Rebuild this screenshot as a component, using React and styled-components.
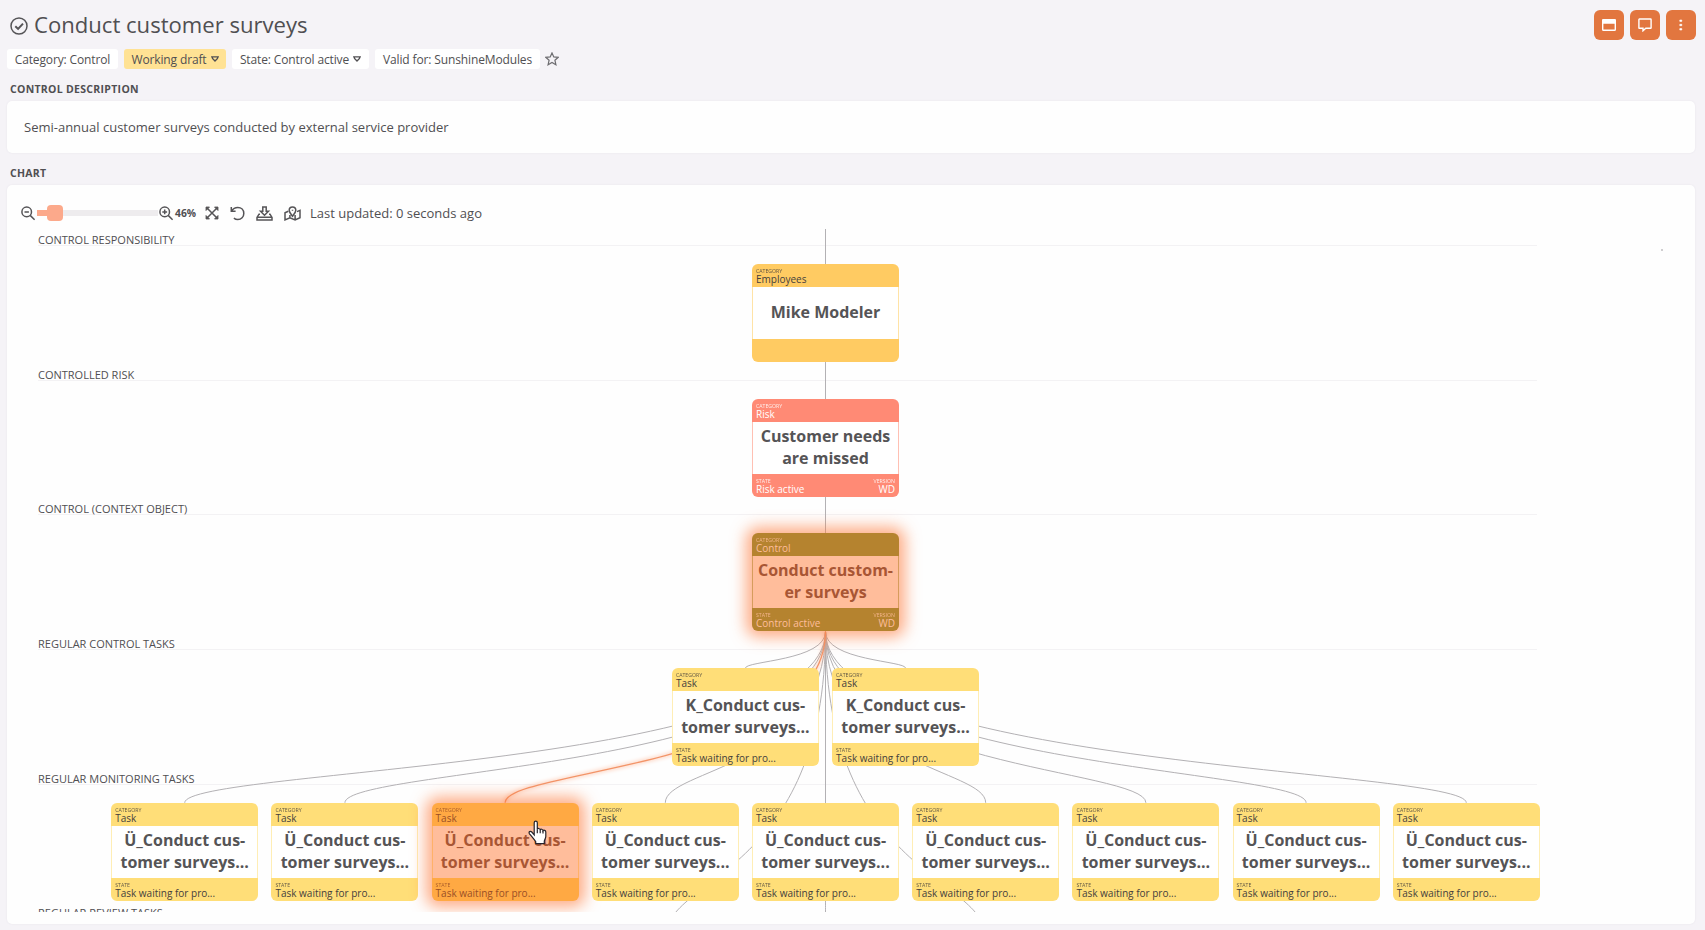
import React from "react";
import styled, { createGlobalStyle } from "styled-components";

const lanes = [
  "Control responsibility",
  "Controlled risk",
  "Control (context object)",
  "Regular control tasks",
  "Regular monitoring tasks",
  "Regular review tasks",
];

const LANE = 134.7;
const COLUMN = 160.2;
const CENTER = 818.5;
const NODE_WIDTH = 147;
const CONTROL_BOTTOM = 402.5;

const rowTop = (row) => 35 + row * LANE;
const columnLeft = (col) => CENTER + col * COLUMN - NODE_WIDTH / 2;

const monitoring = [-4, -3, -2, -1, 0, 1, 2, 3, 4];

const nodes = [
  { row: 0, col: 0, kind: "employee", category: "Employees", lines: ["Mike Modeler"] },
  {
    row: 1,
    col: 0,
    kind: "risk",
    category: "Risk",
    lines: ["Customer needs", "are missed"],
    state: "Risk active",
    version: "WD",
  },
  {
    row: 2,
    col: 0,
    kind: "control",
    category: "Control",
    lines: ["Conduct custom-", "er surveys"],
    state: "Control active",
    version: "WD",
  },
  ...[-0.5, 0.5].map((col) => ({
    row: 3,
    col,
    kind: "task",
    category: "Task",
    lines: ["K_Conduct cus-", "tomer surveys..."],
    state: "Task waiting for pro...",
  })),
  ...monitoring.map((col) => ({
    row: 4,
    col,
    kind: col === -2 ? "hovered" : "task",
    category: "Task",
    lines: ["Ü_Conduct cus-", "tomer surveys..."],
    state: "Task waiting for pro...",
  })),
];

const edges = [
  ...[-0.5, 0.5].map((col) => ({ row: 3, col })),
  ...monitoring.map((col) => ({ row: 4, col })),
  ...[-1, 0, 1].map((col) => ({ row: 5, col })),
];

const palette = {
  employee: { bar: "#ffcb62", body: "#fff", border: "#ffe3a6", text: "#45403d", title: "#555456" },
  risk: { bar: "#ff8a75", body: "#fff", border: "#ffc0b3", text: "#fff", title: "#555456" },
  control: { bar: "#b5832f", body: "#ffbd9b", border: "#d69c5c", text: "#ffbd9b", title: "#a85634" },
  task: { bar: "#ffde78", body: "#fff", border: "#ffeeb5", text: "#45403d", title: "#555456" },
  hovered: { bar: "#ffa943", body: "#ffbd9b", border: "#ffb168", text: "#9a4f26", title: "#a85634" },
};

const edgePath = ({ row, col }) => {
  const x = CENTER + col * COLUMN;
  const y = rowTop(row);
  const bend = CONTROL_BOTTOM + (y - CONTROL_BOTTOM) * 0.8;
  return `M${CENTER} ${CONTROL_BOTTOM}C${CENTER} ${bend} ${x} ${bend} ${x} ${y}`;
};

function Node({ node }) {
  const colors = palette[node.kind];
  const glow = node.kind === "control" || node.kind === "hovered";
  return (
    <NodeBox
      $colors={colors}
      $glow={glow}
      style={{ left: columnLeft(node.col), top: rowTop(node.row) }}
    >
      <NodeBar $colors={colors}>
        <Field>
          <FieldName>CATEGORY</FieldName>
          <FieldValue>{node.category}</FieldValue>
        </Field>
      </NodeBar>
      <NodeTitle $colors={colors}>
        {node.lines.map((line) => (
          <span key={line}>{line}</span>
        ))}
      </NodeTitle>
      <NodeBar $colors={colors}>
        {node.state && (
          <Field>
            <FieldName>STATE</FieldName>
            <FieldValue>{node.state}</FieldValue>
          </Field>
        )}
        {node.version && (
          <Field $right>
            <FieldName>VERSION</FieldName>
            <FieldValue>{node.version}</FieldValue>
          </Field>
        )}
      </NodeBar>
    </NodeBox>
  );
}

function Caret() {
  return (
    <CaretIcon viewBox="0 0 8 6">
      <path d="M.9.9h6.2l-.8 1.8L4 5 1.7 2.7z" />
    </CaretIcon>
  );
}

function Toolbar() {
  return (
    <ToolbarRow>
      <Icon $w={15} viewBox="0 0 15 15">
        <circle cx="5.7" cy="5.9" r="4.8" />
        <path d="M9.2 9.4l4.4 4.4M3.5 5.9h4.4" />
      </Icon>
      <Slider>
        <SliderThumb />
      </Slider>
      <Icon $w={15} viewBox="0 0 15 15">
        <circle cx="5.7" cy="5.9" r="4.8" />
        <path d="M9.2 9.4l4.4 4.4M3.3 5.9h4.8M5.7 3.5v4.8" />
      </Icon>
      <Percent>46%</Percent>
      <Icon $w={14} viewBox="0 0 14 14">
        <path d="M1.5 1.5l11 11M12.5 1.5l-11 11" />
        <path
          d="M1 1h3.5L1 4.5zM13 1v3.5L9.5 1zM13 13H9.5L13 9.5zM1 13V9.5L4.5 13z"
          fill="#555457"
          strokeWidth=".8"
        />
      </Icon>
      <Icon $w={15} $left={11} viewBox="0 0 15 15">
        <path d="M1.3 1v4.3h4.3M1.6 5.1C3 2.7 5.2 1.4 7.8 1.4c3.5 0 6 2.6 6 6s-2.5 6.1-6 6.1c-1.6 0-2.8-.5-3.9-1.4" />
      </Icon>
      <Icon $w={17} $left={11} viewBox="0 0 17 15">
        <path d="M6.8 1h3.4v4.2h2.3L8.5 9.3 4.5 5.2h2.3zM4 8.2H3L1 11.4V14h15v-2.6l-2-3.2h-1M1 11.2h15" />
      </Icon>
      <Icon $w={17} $left={11} viewBox="0 0 17 15">
        <path d="M8.5 10.2C6.6 7.7 5.2 6.3 5.2 4.3a3.3 3.3 0 0 1 6.6 0c0 2-1.4 3.4-3.3 5.9zM8.5 3.8v.9M4.3 5.2L1 6.7v7.2l4.9-2.1 5.2 2.1 4.9-2.1V4.4l-3 1.2M5.9 9v2.8M11.1 9v4.9" />
      </Icon>
      <Updated>Last updated: 0 seconds ago</Updated>
    </ToolbarRow>
  );
}

function App() {
  return (
    <Page>
      <GlobalStyle />
      <Header>
        <Heading>
          <Icon $w={18} viewBox="0 0 18 18">
            <circle cx="9" cy="9" r="8" />
            <path d="M5.3 9.2l2.8 2.7 4.9-5.3" strokeWidth="2" />
          </Icon>
          <Title>Conduct customer surveys</Title>
        </Heading>
        <Actions>
          <ActionButton>
            <svg width="14" height="12" viewBox="0 0 14 12">
              <rect x=".7" y=".7" width="12.6" height="10.6" rx=".8" />
              <path d="M1 1h12v3H1z" fill="#fff" />
            </svg>
          </ActionButton>
          <ActionButton>
            <svg width="14" height="14" viewBox="0 0 14 14">
              <path d="M1.4 1h11.2q.5 0 .5.5v8.3q0 .5-.5.5H7.8L5 12.8v-2.5H1.4q-.5 0-.5-.5V1.5q0-.5.5-.5z" />
            </svg>
          </ActionButton>
          <ActionButton>
            <svg width="4" height="12" viewBox="0 0 4 12">
              <path d="M.8 1h2v1.4h-2zM.8 5.3h2v1.4h-2zM.8 9.6h2V11h-2z" fill="#fff" strokeWidth=".6" />
            </svg>
          </ActionButton>
        </Actions>
      </Header>
      <Tags>
        <Tag $w={111}>Category: Control</Tag>
        <Tag $w={102} $active>
          Working draft <Caret />
        </Tag>
        <Tag $w={137}>
          State: Control active <Caret />
        </Tag>
        <Tag $w={165}>Valid for: SunshineModules</Tag>
        <StarIcon viewBox="0 0 14 14">
          <path d="M7 .9l1.8 4 4.4.4-3.3 2.9 1 4.5L7 10.4l-3.9 2.3 1-4.5L.8 5.3l4.4-.4z" />
        </StarIcon>
      </Tags>
      <SectionLabel>Control description</SectionLabel>
      <Description>Semi-annual customer surveys conducted by external service provider</Description>
      <SectionLabel>Chart</SectionLabel>
      <ChartCard>
        <Toolbar />
        <Canvas>
          <Lanes>
            {lanes.map((lane) => (
              <Lane key={lane}>{lane}</Lane>
            ))}
          </Lanes>
          <Edges width="1688" height="683">
            <path d={`M${CENTER} 0V${rowTop(2)}`} />
            {edges
              .filter((edge) => !(edge.row === 4 && edge.col === -2))
              .map((edge) => (
                <path key={`${edge.row}/${edge.col}`} d={edgePath(edge)} />
              ))}
            <ActiveEdge d={edgePath({ row: 4, col: -2 })} />
          </Edges>
          {nodes.map((node) => (
            <Node key={`${node.row}/${node.col}`} node={node} />
          ))}
          <Dot />
          <Pointer viewBox="0 0 20 25">
            <path d="M6.2 14.8V2.7c0-2.2 3.1-2.2 3.1 0v6.6c.3-1.3 2.8-1.1 2.9.6.5-1.1 2.7-.9 2.8.8.7-.9 2.8-.5 2.8 1.3v4.6c0 1.7-1.3 3.2-1.5 4.6v2.4H7.7v-2.1C6 19.3 3.7 16.5 1.5 13.8c-1.4-2 .9-3.2 2.3-1.8z" />
            <path d="M9.3 9.3v3.9M12.2 10v3.3M15 10.7v2.9" />
          </Pointer>
        </Canvas>
      </ChartCard>
    </Page>
  );
}

export default App;

const GlobalStyle = createGlobalStyle`
  * {
    box-sizing: border-box;
  }

  body {
    margin: 0;
    background: #f5f3f7;
    color: #504f52;
    font-family: "Open Sans", "Noto Sans", sans-serif;
    font-size: 13px;
    overflow: hidden;
  }
`;

const Page = styled.div`
  display: flex;
  flex-direction: column;
  height: 930px;
  padding: 10px 10px 6px 7px;
`;

const Header = styled.div`
  display: flex;
  justify-content: space-between;
  height: 39px;
  margin-right: -1px;
`;

const Heading = styled.div`
  display: flex;
  align-items: center;
  height: 31px;
  padding-left: 3px;
  gap: 6px;
`;

const Title = styled.h1`
  margin: 0;
  padding-bottom: 2px;
  font-size: 22.1px;
  font-weight: 400;
  line-height: 29px;
  white-space: nowrap;
`;

const Actions = styled.div`
  display: flex;
  gap: 6px;
`;

const ActionButton = styled.button`
  display: flex;
  align-items: center;
  justify-content: center;
  width: 30px;
  height: 30px;
  padding: 0;
  border: none;
  border-radius: 6px;
  background: #e2763f;

  svg {
    fill: none;
    stroke: #fff;
    stroke-width: 1.4;
  }
`;

const Tags = styled.div`
  display: flex;
  align-items: center;
  gap: 6px;
  height: 20px;
`;

const Tag = styled.div`
  display: flex;
  align-items: center;
  justify-content: center;
  gap: 4px;
  width: ${(p) => p.$w}px;
  height: 20px;
  border-radius: 3px;
  background: ${(p) => (p.$active ? "#ffe294" : "#fff")};
  font-size: 12px;
  letter-spacing: -0.13px;
  white-space: nowrap;
`;

const CaretIcon = styled.svg`
  width: 8px;
  height: 6px;
  fill: none;
  stroke: #504f52;
  stroke-width: 1.4;
`;

const StarIcon = styled.svg`
  width: 14px;
  height: 14px;
  margin-left: -1px;
  fill: none;
  stroke: #6d6c70;
  stroke-width: 1.2;
`;

const SectionLabel = styled.div`
  height: 32px;
  padding: 12px 3px 0;
  font-size: 10.5px;
  font-weight: 700;
  letter-spacing: 0.3px;
  line-height: 16px;
  text-transform: uppercase;
`;

const Card = styled.div`
  border-radius: 5px;
  background: #fefefe;
  box-shadow: 0 0 2px rgba(60, 50, 80, 0.08);
`;

const Description = styled(Card)`
  height: 52px;
  padding: 0 17px;
  line-height: 52px;
`;

const ChartCard = styled(Card)`
  flex: 1;
`;

const ToolbarRow = styled.div`
  display: flex;
  align-items: center;
  height: 44px;
  padding: 12px 0 0 14px;
`;

const Icon = styled.svg`
  flex: none;
  width: ${(p) => p.$w}px;
  height: auto;
  margin-left: ${(p) => p.$left || 0}px;
  fill: none;
  stroke: #555457;
  stroke-width: 1.5;
`;

const Slider = styled.div`
  display: flex;
  align-items: center;
  width: 121px;
  height: 6px;
  margin: -1px 1px 0;
  padding-left: 10px;
  background: linear-gradient(to right, #fca98b 12px, #eeecee 12px);
`;

const SliderThumb = styled.div`
  width: 16px;
  height: 16px;
  border-radius: 4px;
  background: #fca98b;
`;

const Percent = styled.span`
  width: 31px;
  padding-left: 1px;
  font-size: 10.3px;
  font-weight: 700;
`;

const Updated = styled.span`
  margin-left: 9px;
  font-size: 13px;
  white-space: nowrap;
`;

const Canvas = styled.div`
  position: relative;
  height: 683px;
  overflow: hidden;
`;

const Lanes = styled.div`
  width: 1499px;
  margin-left: 31px;
`;

const Lane = styled.div`
  height: ${LANE}px;
  background: linear-gradient(#f3f2f4, #f3f2f4) 0 16px / 100% 1px no-repeat;
  font-size: 11px;
  line-height: 21px;
  text-transform: uppercase;
`;

const Edges = styled.svg`
  position: absolute;
  left: 0;
  top: 0;
  fill: none;
  stroke: #b3b1b4;
`;

const ActiveEdge = styled.path`
  stroke: #f29468;
  stroke-width: 1.3;
  filter: drop-shadow(0 0 2px #ff8f5c);
`;

const NodeBox = styled.div`
  position: absolute;
  display: flex;
  flex-direction: column;
  width: ${NODE_WIDTH}px;
  height: 98px;
  overflow: hidden;
  border-radius: 6px;
  background: ${(p) => p.$colors.bar};
  box-shadow: ${(p) => (p.$glow ? "0 0 15px 6px rgba(255, 123, 60, 0.62)" : "none")};
`;

const NodeBar = styled.div`
  display: flex;
  justify-content: space-between;
  height: 23px;
  padding: 4px 4px 0;
  color: ${(p) => p.$colors.text};
`;

const Field = styled.div`
  text-align: ${(p) => (p.$right ? "right" : "left")};
  white-space: nowrap;
`;

const FieldName = styled.div`
  height: 6px;
  font-size: 5.2px;
  line-height: 6px;
  opacity: 0.85;
`;

const FieldValue = styled.div`
  font-size: 10px;
  line-height: 10px;
`;

const NodeTitle = styled.div`
  display: flex;
  flex-direction: column;
  align-items: center;
  justify-content: center;
  height: 52px;
  padding-bottom: 2px;
  border: solid ${(p) => p.$colors.border};
  border-width: 0 1px;
  background: ${(p) => p.$colors.body};
  color: ${(p) => p.$colors.title};
  font-size: 16px;
  font-weight: 700;
  line-height: 22px;
  white-space: nowrap;
`;

const Dot = styled.div`
  position: absolute;
  left: 1654px;
  top: 20px;
  width: 2px;
  height: 2px;
  background: #cfced0;
`;

const Pointer = styled.svg`
  position: absolute;
  left: 521px;
  top: 591px;
  width: 20px;
  height: 25px;
  fill: #fff;
  stroke: #26232b;
  stroke-width: 1.2;
`;
